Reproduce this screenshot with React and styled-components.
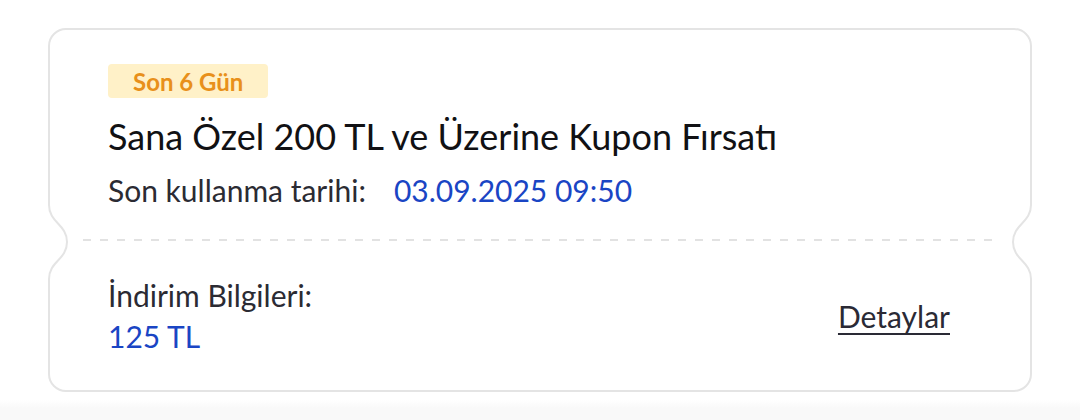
import React from 'react';
import styled, { createGlobalStyle } from 'styled-components';

const Global = createGlobalStyle`
  html, body {
    margin: 0;
    background: #ffffff;
  }
  body {
    font-family: Lato, "Noto Sans", sans-serif;
  }
`;

const Page = styled.div`
  width: 1080px;
  height: 420px;
  padding: 28px 0 0 48px;
  box-sizing: border-box;
  background: linear-gradient(to bottom, #ffffff 0, #ffffff 400px, #f9f9f9 408px);
`;

const Card = styled.div`
  position: relative;
  width: 984px;
  border: 2px solid #e4e4e4;
  border-radius: 18px;
  background: #ffffff;
  box-sizing: border-box;
`;

const Top = styled.div`
  display: flex;
  flex-direction: column;
  align-items: flex-start;
  padding: 34px 58px 31px;
`;

const Badge = styled.span`
  display: inline-flex;
  align-items: center;
  height: 34px;
  padding: 0 25px;
  border-radius: 4px;
  background: #fff1c8;
  color: #e8901b;
  font-size: 24px;
  font-weight: 700;
`;

const Title = styled.h2`
  margin: 16px 0 0;
  font-size: 36px;
  line-height: 44px;
  font-weight: 400;
  color: #111114;
`;

const Row = styled.div`
  display: flex;
  gap: 28px;
  margin-top: 14px;
  font-size: 30px;
  line-height: 36px;
`;

const Label = styled.span`
  color: #2b2b33;
`;

const Value = styled.span`
  color: #1a45c4;
`;

const Divider = styled.div`
  height: 2px;
  margin: 0 33px;
  background: repeating-linear-gradient(
    to right,
    #e2e2e2 0,
    #e2e2e2 8px,
    transparent 8px,
    transparent 17px
  );
`;

const Bottom = styled.div`
  display: flex;
  align-items: center;
  justify-content: space-between;
  padding: 34px 80px 33px 58px;
`;

const Info = styled.div`
  display: flex;
  flex-direction: column;
  font-size: 30px;
  line-height: 41px;
`;

const DetailLink = styled.a`
  color: #2a2a35;
  font-size: 30px;
  line-height: 36px;
  text-decoration: underline;
  text-underline-offset: 5px;
  text-decoration-thickness: 1.5px;
  cursor: pointer;
`;

const Notch = styled.svg`
  position: absolute;
  top: 174px;
  ${(p) => (p.$side === 'left' ? 'left: -2px;' : 'right: -2px; transform: scaleX(-1);')}
  width: 22px;
  height: 76px;
  overflow: visible;
`;

const NotchShape = ({ side }) => (
  <Notch $side={side} viewBox="0 0 22 76">
    <rect x="-1" y="0" width="4" height="76" fill="#ffffff" />
    <path
      d="M1 -1 L1 1 C1 19, 19 20, 19 38 C19 56, 1 57, 1 75 L1 77"
      fill="#ffffff"
      stroke="#e4e4e4"
      strokeWidth="2"
    />
  </Notch>
);

export default function App() {
  return (
    <>
      <Global />
      <Page>
        <Card>
          <NotchShape side="left" />
          <NotchShape side="right" />
          <Top>
            <Badge>Son 6 Gün</Badge>
            <Title>Sana Özel 200 TL ve Üzerine Kupon Fırsatı</Title>
            <Row>
              <Label>Son kullanma tarihi:</Label>
              <Value>03.09.2025 09:50</Value>
            </Row>
          </Top>
          <Divider />
          <Bottom>
            <Info>
              <Label>İndirim Bilgileri:</Label>
              <Value>125 TL</Value>
            </Info>
            <DetailLink>Detaylar</DetailLink>
          </Bottom>
        </Card>
      </Page>
    </>
  );
}
